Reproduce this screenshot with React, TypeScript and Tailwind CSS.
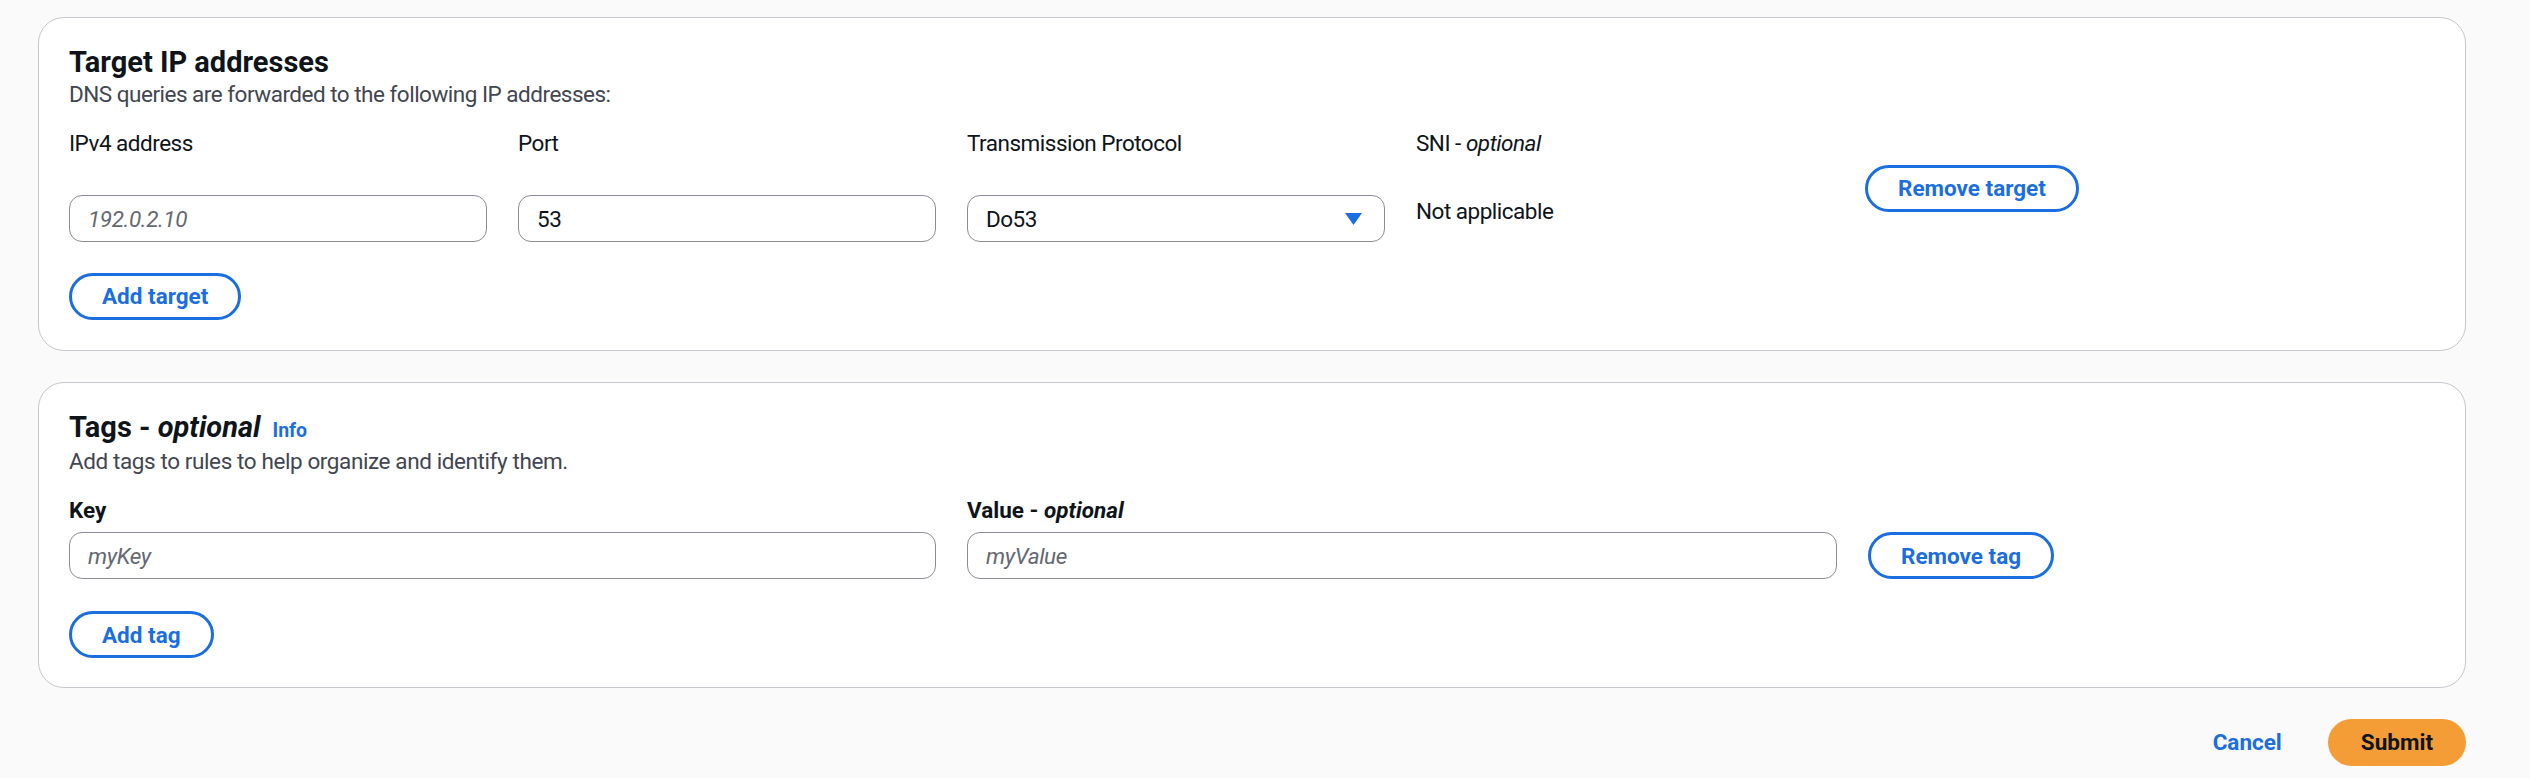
import type { ReactNode } from "react";

const BLUE = "text-[#1b6ee0]";

function OutlineButton({ children }: { children: ReactNode }) {
  return (
    <button className="h-[47px] shrink-0 rounded-full border-[3px] border-[#1b6ee0] bg-white px-[30px] text-[22.5px] font-bold leading-none text-[#1b6ee0]">
      {children}
    </button>
  );
}

function TextInput({ value, placeholder }: { value?: string; placeholder?: string }) {
  return (
    <input
      defaultValue={value}
      placeholder={placeholder}
      className="h-[47px] w-full rounded-[13px] border border-[#8c8c94] bg-white px-[18px] text-[22.5px] tracking-[-0.4px] text-[#0f141a] outline-none placeholder:italic placeholder:text-[#656871]"
    />
  );
}

function Card({ children, className = "" }: { children: ReactNode; className?: string }) {
  return (
    <section className={`rounded-[26px] border border-[#c6c6cd] bg-white px-[30px] pt-[28px] ${className}`}>
      {children}
    </section>
  );
}

export default function App() {
  return (
    <div className="min-h-[778px] w-[2530px] bg-[#fafafa] pl-[38px] pr-[64px] pt-[17px] font-[Roboto,'Noto_Sans',sans-serif] text-[#0f141a]">
      <Card className="pb-[30px]">
        <h2 className="text-[29px] font-bold leading-[32px]">Target IP addresses</h2>
        <p className="text-[22.5px] leading-[32px] tracking-[-0.5px] text-[#424650]">
          DNS queries are forwarded to the following IP addresses:
        </p>

        <div className="mt-[17px] grid grid-cols-[repeat(5,418px)] gap-x-[31px] text-[22.5px] leading-[32px] tracking-[-0.5px]">
          <div className="flex flex-col">
            <label>IPv4 address</label>
            <div className="mt-[36px]">
              <TextInput placeholder="192.0.2.10" />
            </div>
          </div>
          <div className="flex flex-col">
            <label>Port</label>
            <div className="mt-[36px]">
              <TextInput value="53" />
            </div>
          </div>
          <div className="flex flex-col">
            <label>Transmission Protocol</label>
            <button className="mt-[36px] flex h-[47px] w-full items-center justify-between rounded-[13px] border border-[#8c8c94] bg-white pl-[18px] pr-[22px]">
              <span>Do53</span>
              <svg width="17" height="12" viewBox="0 0 17 12">
                <polygon points="0,0 17,0 8.5,12" fill="#1b6ee0" />
              </svg>
            </button>
          </div>
          <div className="flex flex-col">
            <label>
              SNI - <i>optional</i>
            </label>
            <span className="mt-[36px]">Not applicable</span>
          </div>
          <div className="flex items-start pt-[38px] tracking-normal">
            <OutlineButton>Remove target</OutlineButton>
          </div>
        </div>

        <div className="mt-[31px]">
          <OutlineButton>Add target</OutlineButton>
        </div>
      </Card>

      <Card className="mt-[31px] pb-[29px]">
        <div className="flex items-baseline">
          <h2 className="text-[29px] font-bold leading-[32px]">
            Tags - <i>optional</i>
          </h2>
          <a className={`ml-[12px] text-[19.5px] font-bold ${BLUE}`}>Info</a>
        </div>
        <p className="text-[22.5px] leading-[32px] tracking-[-0.4px] text-[#424650]">
          Add tags to rules to help organize and identify them.
        </p>

        <div className="mt-[17px] grid grid-cols-[867px_870px_auto] gap-x-[31px]">
          <div className="flex flex-col">
            <label className="text-[22.5px] font-bold leading-[32px]">Key</label>
            <div className="mt-[6px]">
              <TextInput placeholder="myKey" />
            </div>
          </div>
          <div className="flex flex-col">
            <label className="text-[22.5px] font-bold leading-[32px]">
              Value - <i>optional</i>
            </label>
            <div className="mt-[6px]">
              <TextInput placeholder="myValue" />
            </div>
          </div>
          <div className="flex items-start pt-[38px]">
            <OutlineButton>Remove tag</OutlineButton>
          </div>
        </div>

        <div className="mt-[32px]">
          <OutlineButton>Add tag</OutlineButton>
        </div>
      </Card>

      <div className="mt-[31px] flex items-center justify-end gap-[46px]">
        <a className={`text-[22.5px] font-bold ${BLUE}`}>Cancel</a>
        <button className="h-[47px] rounded-full bg-[#f49d37] px-[33px] text-[22.5px] font-bold text-[#0f141a]">
          Submit
        </button>
      </div>
    </div>
  );
}
